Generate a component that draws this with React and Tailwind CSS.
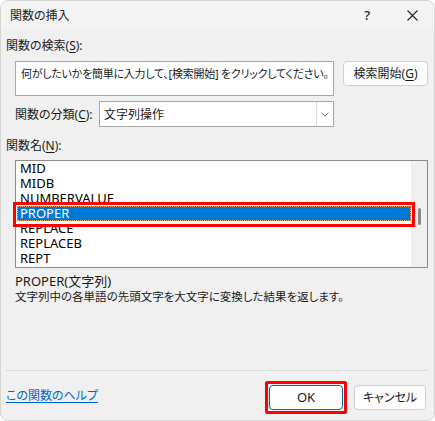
import React from 'react';

const U = ({ children }) => <span className="underline underline-offset-2">{children}</span>;

const items = ['MID', 'MIDB', 'NUMBERVALUE', 'PROPER', 'REPLACE', 'REPLACEB', 'REPT'];

export default function App() {
  return (
    <div className="w-[435px] h-[421px] bg-white text-[12px] leading-[15px] text-[#1a1a1a] font-['Noto_Sans','Noto_Sans_CJK_JP',sans-serif] [font-feature-settings:'palt']">
      <div className="h-full rounded-[8px] bg-[#f0f0f0] border border-[#d4d4d4] overflow-hidden flex flex-col">
        {/* title bar */}
        <div className="h-[29px] shrink-0 flex items-center pl-[9px] bg-[#f3f3f3]">
          <span>関数の挿入</span>
          <span className="ml-auto text-[13px] font-medium">?</span>
          <svg className="ml-[37px] mr-[16px]" width="11" height="11" viewBox="0 0 11 11">
            <path d="M0.5 0.5 L10.5 10.5 M10.5 0.5 L0.5 10.5" stroke="#222" strokeWidth="1.1" />
          </svg>
        </div>

        <div className="flex flex-col pl-[5px]">
          <div className="mt-[8px]">関数の検索(<U>S</U>):</div>

          <div className="flex mt-[8px] pl-[9px]">
            <div className="w-[319px] h-[35px] bg-white border border-[#a8a8a8] pl-[5px] pt-[4px] whitespace-nowrap text-[11px] tracking-[-0.25px]">
              何がしたいかを簡単に入力して、[検索開始] をクリックしてください。
            </div>
            <button className="ml-[9px] w-[85px] h-[25px] rounded-[4px] border border-[#d0d0d0] bg-[#fdfdfd] flex items-center justify-center">
              検索開始(<U>G</U>)
            </button>
          </div>

          <div className="flex items-center mt-[5px] pl-[9px]">
            <div className="w-[84px]">関数の分類(<U>C</U>):</div>
            <div className="w-[235px] h-[26px] bg-white border border-[#a8a8a8] flex items-center">
              <span className="pl-[4px] flex-1">文字列操作</span>
              <div className="w-[17px] h-full border-l border-[#d8d8d8] flex items-center justify-center">
                <svg width="8" height="5" viewBox="0 0 8 5">
                  <path d="M0.5 0.5 L4 4 L7.5 0.5" fill="none" stroke="#777" strokeWidth="1" />
                </svg>
              </div>
            </div>
          </div>

          <div className="mt-[11px]">関数名(<U>N</U>):</div>

          <div className="relative ml-[9px] mt-[7px] w-[413px] h-[108px] bg-white border border-[#8c8c8c] flex">
            <div className="w-[395px] flex flex-col text-[13px] leading-[15px] text-black">
              {items.map((it) =>
                it === 'PROPER' ? (
                  <div key={it} className="ml-[1px] h-[15px] bg-[#0078d7] text-white pl-[2px] border border-dotted border-[#e8a86a] leading-[13px]">
                    {it}
                  </div>
                ) : (
                  <div key={it} className="ml-[1px] h-[15px] pl-[3px]">
                    {it}
                  </div>
                )
              )}
            </div>
            <div className="w-[16px] h-full bg-[#f0f0f0]">
              <div className="ml-[7px] mt-[47px] w-[3px] h-[17px] rounded-full bg-[#8a8a8a]" />
            </div>
            <div className="absolute left-[-3px] top-[41px] w-[402px] h-[25px] border-[3px] border-[#ff0000]" />
          </div>

          <div className="ml-[9px] mt-[6px] text-[13px]">PROPER(文字列)</div>
          <div className="ml-[9px] text-[11.5px]">文字列中の各単語の先頭文字を大文字に変換した結果を返します。</div>

          <div className="mt-[66px] h-[1px] w-[422px] bg-[#dadada]" />

          <div className="flex mt-[14px] pr-[8px]">
            <a className="mt-[3px] text-[#0066cc] underline underline-offset-2">この関数のヘルプ</a>
            <div className="ml-auto relative">
              <button className="w-[74px] h-[25px] rounded-[4px] border border-[#0067c0] bg-[#fdfdfd] text-[13px] flex items-center justify-center">
                OK
              </button>
              <div className="absolute left-[-4px] top-[-4px] w-[82px] h-[33px] border-[3px] border-[#ff0000] rounded-[2px]" />
            </div>
            <button className="ml-[11px] w-[72px] h-[25px] rounded-[4px] border border-[#d0d0d0] bg-[#fdfdfd] flex items-center justify-center">
              キャンセル
            </button>
          </div>
        </div>
      </div>
    </div>
  );
}
